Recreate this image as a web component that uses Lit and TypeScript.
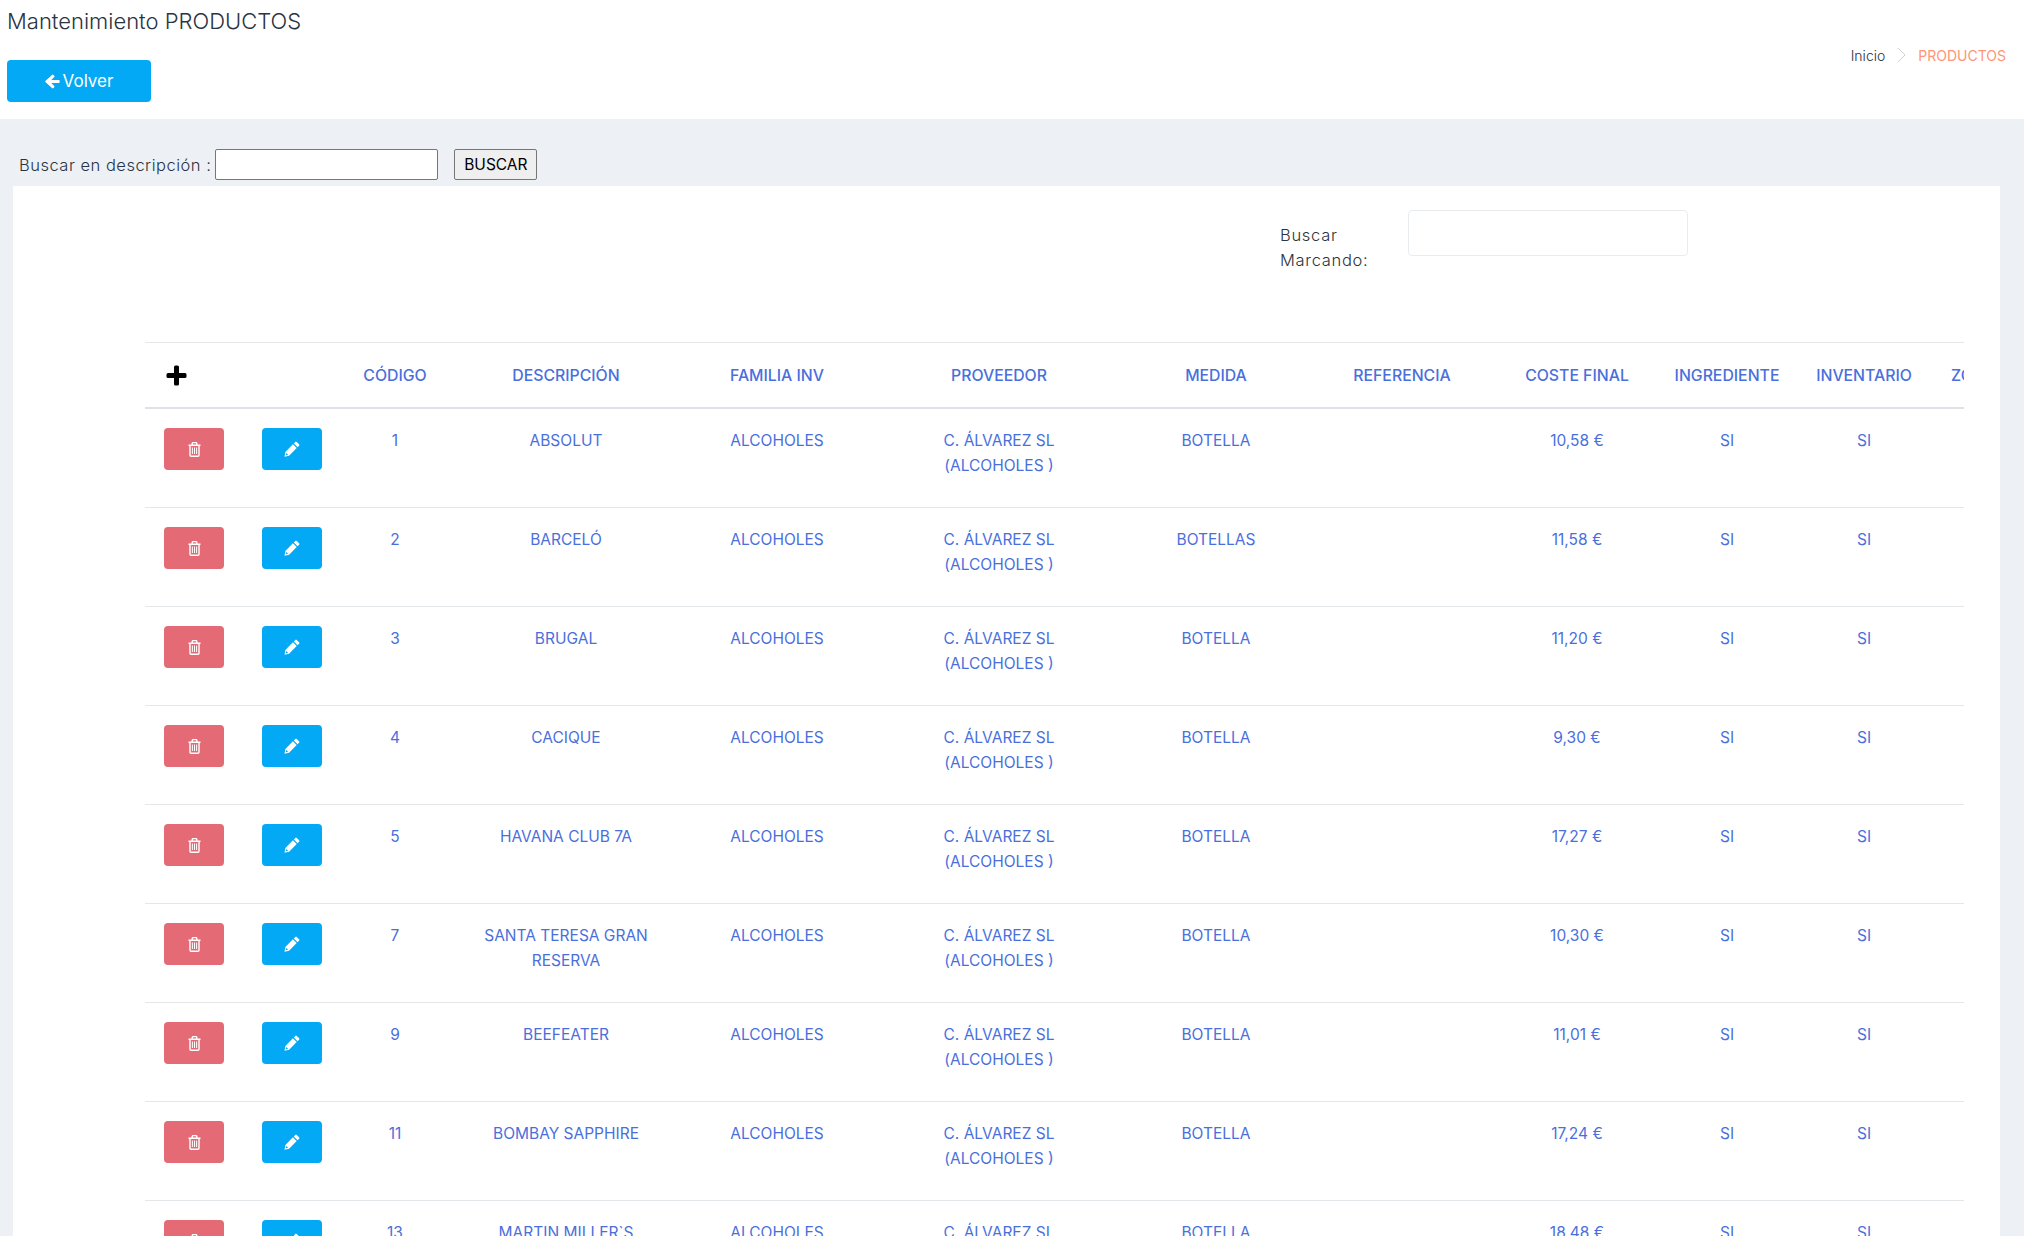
import { LitElement, html, css, svg } from "lit";
import { customElement } from "lit/decorators.js";

interface Producto {
  codigo: number;
  descripcion: string;
  medida: string;
  coste: string;
}

const COLUMNS = [
  { label: "", width: 98 },
  { label: "", width: 98 },
  { label: "CÓDIGO", width: 108 },
  { label: "DESCRIPCIÓN", width: 234 },
  { label: "FAMILIA INV", width: 188 },
  { label: "PROVEEDOR", width: 256 },
  { label: "MEDIDA", width: 178 },
  { label: "REFERENCIA", width: 194 },
  { label: "COSTE FINAL", width: 156 },
  { label: "INGREDIENTE", width: 144 },
  { label: "INVENTARIO", width: 130 },
  { label: "ZONA", width: 89 },
];

const PRODUCTOS: Producto[] = [
  { codigo: 1, descripcion: "ABSOLUT", medida: "BOTELLA", coste: "10,58 €" },
  { codigo: 2, descripcion: "BARCELÓ", medida: "BOTELLAS", coste: "11,58 €" },
  { codigo: 3, descripcion: "BRUGAL", medida: "BOTELLA", coste: "11,20 €" },
  { codigo: 4, descripcion: "CACIQUE", medida: "BOTELLA", coste: "9,30 €" },
  { codigo: 5, descripcion: "HAVANA CLUB 7A", medida: "BOTELLA", coste: "17,27 €" },
  { codigo: 7, descripcion: "SANTA TERESA GRAN RESERVA", medida: "BOTELLA", coste: "10,30 €" },
  { codigo: 9, descripcion: "BEEFEATER", medida: "BOTELLA", coste: "11,01 €" },
  { codigo: 11, descripcion: "BOMBAY SAPPHIRE", medida: "BOTELLA", coste: "17,24 €" },
  { codigo: 13, descripcion: "MARTIN MILLER`S", medida: "BOTELLA", coste: "18,48 €" },
];

const trashIcon = svg`<svg width="13" height="15" viewBox="0 0 13 15" fill="none" stroke="#fff" stroke-width="1.4">
  <path d="M.5 3.200h12M2 3.200v10a1 1 0 0 0 1 1h7a1 1 0 0 0 1-1v-10M4.200 3V1.600a1 1 0 0 1 1-1h2.600a1 1 0 0 1 1 1V3"/>
  <path d="M4.400 5.500v6.500M6.500 5.500v6.500M8.600 5.500v6.500" stroke-width="1"/>
</svg>`;

const pencilIcon = svg`<svg width="16" height="16" viewBox="0 0 16 16" fill="#fff">
  <path d="M11.300.9a1 1 0 0 1 1.400 0l2.400 2.400a1 1 0 0 1 0 1.400l-1.500 1.500-3.800-3.800zM8.900 3.300l3.800 3.800-7.600 7.600-4.600 1 .9-4.700zM2.200 11.900l-.5 2.400 2.400-.5z" fill-rule="evenodd"/>
</svg>`;

const arrowIcon = svg`<svg width="15" height="15" viewBox="0 0 15 15" fill="#fff">
  <path d="M7 .9a1 1 0 0 1 1.400 0l.8.8a1 1 0 0 1 0 1.400L6.300 5.900h7.400a1 1 0 0 1 1 1v1.200a1 1 0 0 1-1 1H6.300l2.900 2.800a1 1 0 0 1 0 1.400l-.8.800a1 1 0 0 1-1.400 0L.6 8.200a1 1 0 0 1 0-1.400z"/>
</svg>`;

const plusIcon = svg`<svg width="21" height="21" viewBox="0 0 21 21" fill="#000">
  <path d="M8 2a1.500 1.500 0 0 1 1.500-1.500h2A1.500 1.500 0 0 1 13 2v6h6a1.500 1.500 0 0 1 1.500 1.500v2A1.500 1.500 0 0 1 19 13h-6v6a1.500 1.500 0 0 1-1.500 1.500h-2A1.500 1.500 0 0 1 8 19v-6H2A1.500 1.500 0 0 1 .5 11.500v-2A1.500 1.500 0 0 1 2 8h6z"/>
</svg>`;

@customElement("app-root")
export class AppRoot extends LitElement {
  static styles = css`
    :host {
      display: block;
      height: 100vh;
      overflow: hidden;
      background: #edf1f5;
      font-family: Inter, "Liberation Sans", sans-serif;
      font-size: 15.5px;
      color: #3e5569;
    }

    .top {
      display: flex;
      justify-content: space-between;
      height: 119px;
      box-sizing: border-box;
      padding: 8px 18px 0 7px;
      background: #fff;
    }

    .title {
      margin: 0;
      font-size: 22px;
      line-height: 26px;
      font-weight: 300;
      color: #2a3340;
    }

    .back {
      display: flex;
      align-items: center;
      justify-content: center;
      gap: 3px;
      width: 144px;
      height: 42px;
      margin-top: 26px;
      border: 0;
      border-radius: 4px;
      background: #03a9f4;
      color: #fff;
      font: 400 17px Inter, sans-serif;
    }

    .crumbs {
      display: flex;
      align-items: center;
      gap: 12px;
      height: 20px;
      margin-top: 37px;
      font-size: 14px;
      font-weight: 300;
      color: #2a3340;
    }

    .crumbs .on {
      color: #ff9478;
      font-weight: 400;
    }

    .crumbs svg {
      display: block;
    }

    .search {
      display: flex;
      align-items: center;
      height: 31px;
      margin: 30px 0 6px 19px;
      font-weight: 300;
      font-size: 16.5px;
      letter-spacing: 0.5px;
      color: #2a3340;
    }

    .search input {
      width: 223px;
      height: 31px;
      box-sizing: border-box;
      margin-left: 4px;
      border: 1px solid #767676;
      border-radius: 2px;
      background: #fff;
    }

    .search button {
      width: 83px;
      height: 31px;
      margin-left: 16px;
      padding: 0;
      border: 1px solid #767676;
      border-radius: 2px;
      background: #efefef;
      color: #000;
      font: 400 15.5px Inter, sans-serif;
    }

    .card {
      margin: 0 24px 0 13px;
      padding: 24px 36px 0 132px;
      background: #fff;
    }

    .scan {
      display: flex;
      gap: 28px;
      height: 132px;
      margin-left: 1135px;
      color: #2a3340;
    }

    .scan label {
      width: 100px;
      padding-top: 13px;
      line-height: 25px;
      font-weight: 300;
      font-size: 16.5px;
      letter-spacing: 0.7px;
    }

    .scan input {
      width: 280px;
      height: 46px;
      box-sizing: border-box;
      border: 1px solid #e9ecef;
      border-radius: 4px;
    }

    .table-wrap {
      overflow: hidden;
    }

    table {
      table-layout: fixed;
      border-collapse: separate;
      border-spacing: 0;
      width: 1873px;
      color: #4a6fdc;
      font-weight: 400;
      text-align: center;
    }

    th {
      height: 67px;
      box-sizing: border-box;
      padding: 0;
      border-top: 1px solid #e4e7ea;
      border-bottom: 2px solid #dee2e6;
      font-weight: 500;
      font-size: 15.8px;
      white-space: nowrap;
    }

    td {
      height: 99px;
      box-sizing: border-box;
      padding: 19px 20px 0;
      border-bottom: 1px solid #e4e7ea;
      vertical-align: top;
      line-height: 25px;
    }

    td.tool {
      padding: 19px 0 0;
    }

    td.supplier {
      padding: 19px 40px 0;
    }

    .btn {
      display: flex;
      align-items: center;
      justify-content: center;
      width: 60px;
      height: 42px;
      margin-left: 19px;
      padding: 0;
      border: 0;
      border-radius: 4px;
      color: #fff;
    }

    .btn.del {
      background: #e46a76;
    }

    .btn.edit {
      background: #03a9f4;
    }

    th.add {
      text-align: left;
    }

    .plus {
      display: block;
      margin: 4px 0 0 21px;
    }
  `;

  private _row(p: Producto) {
    return html`
      <tr>
        <td class="tool"><button class="btn del">${trashIcon}</button></td>
        <td class="tool"><button class="btn edit">${pencilIcon}</button></td>
        <td>${p.codigo}</td>
        <td>${p.descripcion}</td>
        <td>ALCOHOLES</td>
        <td class="supplier">C. ÁLVAREZ SL (ALCOHOLES )</td>
        <td>${p.medida}</td>
        <td></td>
        <td>${p.coste}</td>
        <td>SI</td>
        <td>SI</td>
        <td></td>
      </tr>
    `;
  }

  render() {
    return html`
      <header class="top">
        <div>
          <h1 class="title">Mantenimiento PRODUCTOS</h1>
          <button class="back">${arrowIcon}Volver</button>
        </div>
        <nav class="crumbs">
          <span>Inicio</span>
          <svg width="9" height="16" viewBox="0 0 9 16" fill="none" stroke="#ccd2d9">
            <path d="M1 1l7 7-7 7" />
          </svg>
          <span class="on">PRODUCTOS</span>
        </nav>
      </header>
      <div class="search">
        <span>Buscar en descripción :</span>
        <input type="text" />
        <button>BUSCAR</button>
      </div>
      <section class="card">
        <div class="scan">
          <label>Buscar Marcando:</label>
          <input type="text" />
        </div>
        <div class="table-wrap">
          <table>
            <colgroup>
              ${COLUMNS.map((c) => html`<col style="width:${c.width}px" />`)}
            </colgroup>
            <thead>
              <tr>
                ${COLUMNS.map((c, i) =>
                  i === 0
                    ? html`<th class="add"><span class="plus">${plusIcon}</span></th>`
                    : html`<th>${c.label}</th>`
                )}
              </tr>
            </thead>
            <tbody>
              ${PRODUCTOS.map((p) => this._row(p))}
            </tbody>
          </table>
        </div>
      </section>
    `;
  }
}
